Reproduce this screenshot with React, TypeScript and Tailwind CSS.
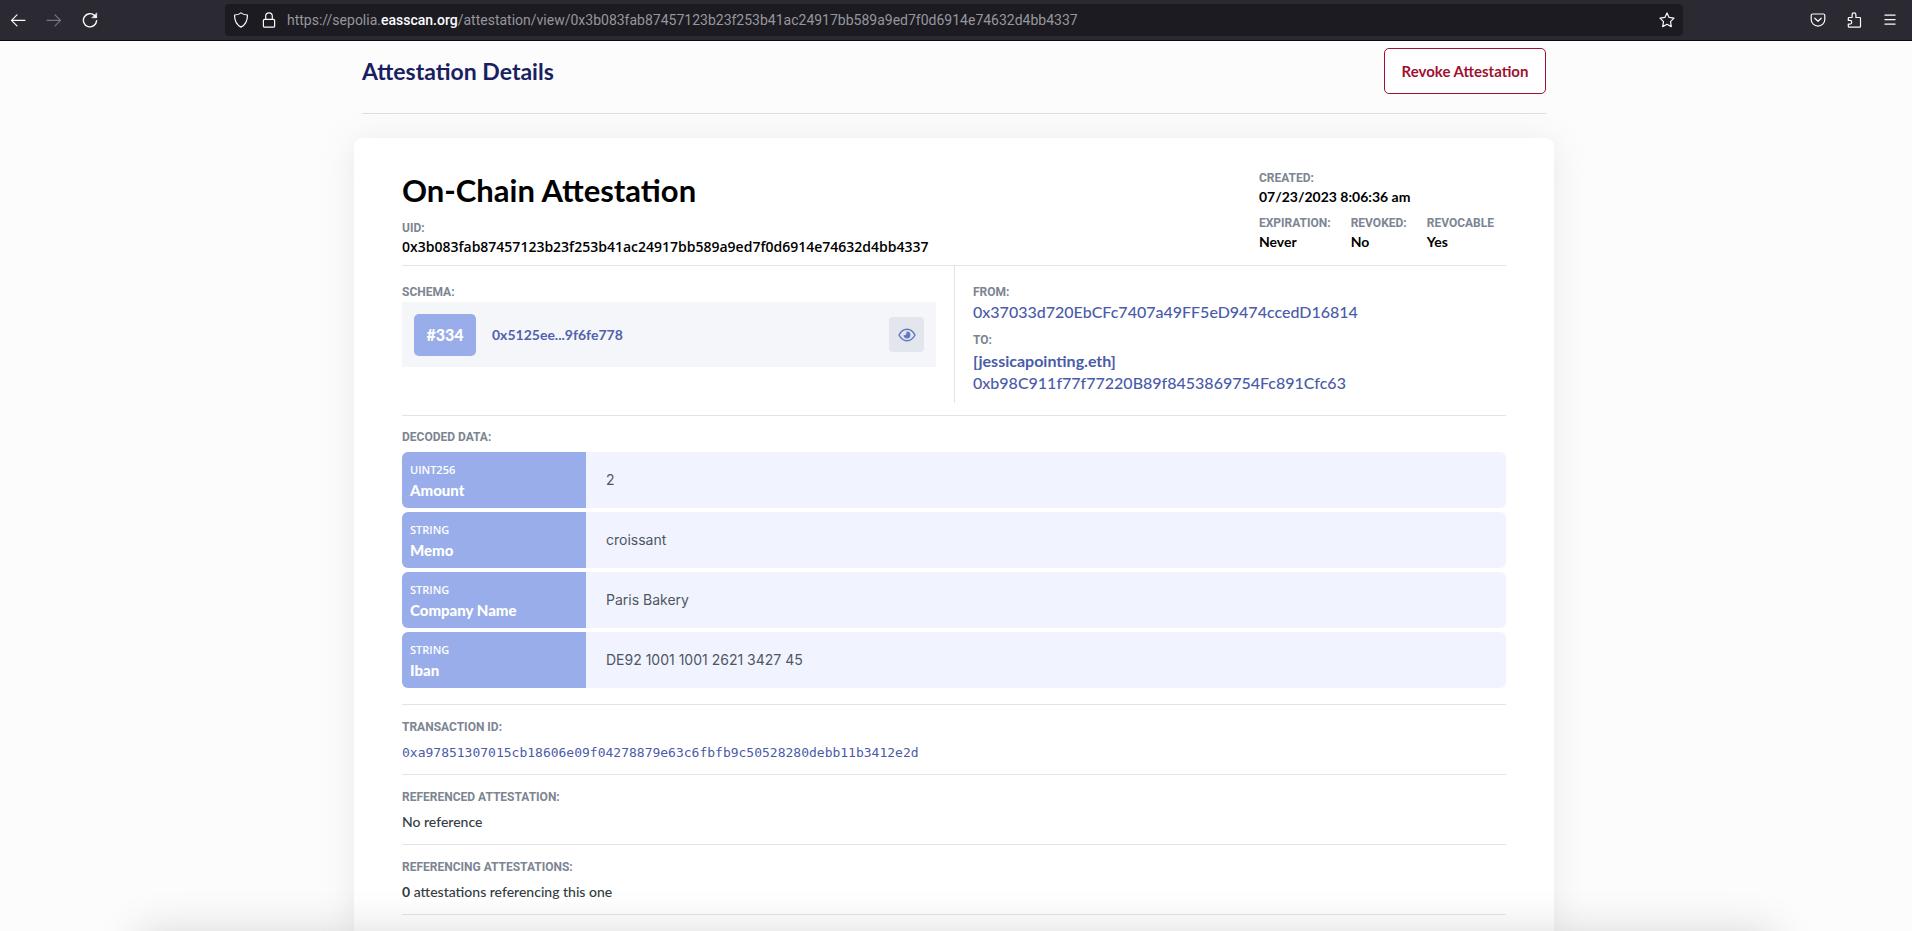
import { ReactNode } from "react";

type DecodedField = { type: string; name: string; value: string };

const decoded: DecodedField[] = [
  { type: "UINT256", name: "Amount", value: "2" },
  { type: "STRING", name: "Memo", value: "croissant" },
  { type: "STRING", name: "Company Name", value: "Paris Bakery" },
  { type: "STRING", name: "Iban", value: "DE92 1001 1001 2621 3427 45" },
];

function Icon({ children, className = "" }: { children: ReactNode; className?: string }) {
  return (
    <svg
      viewBox="0 0 16 16"
      className={`size-4 ${className}`}
      fill="none"
      stroke="currentColor"
      strokeWidth="1.2"
      strokeLinecap="round"
      strokeLinejoin="round"
      aria-hidden="true"
    >
      {children}
    </svg>
  );
}

function Label({ children }: { children: ReactNode }) {
  return (
    <div className="font-['Roboto',sans-serif] text-xs leading-4 font-bold text-[#7c8592] uppercase">
      {children}
    </div>
  );
}

function BrowserBar() {
  return (
    <header className="flex h-[41px] shrink-0 items-center border-b border-[#0c0c0d] bg-[#2b2a33] pr-[14px] pl-[10px] text-[#fbfbfe]">
      <nav className="flex w-[215px] gap-5">
        <button type="button" aria-label="Back">
          <Icon>
            <path d="M15 8.3H1.6M7 2.8 1.5 8.3 7 13.8" />
          </Icon>
        </button>
        <button type="button" aria-label="Forward" className="text-[#77767e]">
          <Icon>
            <path d="M1 8.3h13.4M9 2.8l5.5 5.5L9 13.8" />
          </Icon>
        </button>
        <button type="button" aria-label="Reload">
          <Icon>
            <path d="M14.6 8.6a6.6 6.6 0 1 1-2-5.1L14.2 5" strokeWidth="1.4" />
            <path d="M14.7 1.2v4.6h-4.6z" fill="currentColor" strokeWidth=".6" />
          </Icon>
        </button>
      </nav>
      <div className="flex h-8 min-w-0 flex-1 items-center rounded bg-[#1c1b22] pr-2 pl-2">
        <Icon className="shrink-0">
          <path d="M8 .9C6.6 2.2 4.2 2.9 1.5 3c0 5.6 1.7 9.600 6.500 12.100C12.800 12.600 14.500 8.600 14.500 3 11.800 2.900 9.400 2.200 8 .9z" />
        </Icon>
        <Icon className="ml-3 shrink-0">
          <rect x="2.4" y="7.3" width="11.2" height="7.9" rx="1.3" />
          <path d="M4.7 7.200V4.100a3.300 3.300 0 0 1 6.600 0v3.100" />
        </Icon>
        <div className="ml-[10px] flex-1 truncate font-['Roboto',sans-serif] text-sm text-[#97969c]">
          https://sepolia.<span className="font-medium text-[#fbfbfe]">easscan.org</span>
          /attestation/view/0x3b083fab87457123b23f253b41ac24917bb589a9ed7f0d6914e74632d4bb4337
        </div>
        <button type="button" aria-label="Bookmark this page">
          <Icon>
            <path d="m8 .9 2.100 4.500 4.900.7-3.500 3.500.8 5L8 12.300l-4.300 2.300.8-5L1 6.100l4.900-.7z" />
          </Icon>
        </button>
      </div>
      <div className="flex w-[215px] justify-end gap-5">
        <button type="button" aria-label="Save to Pocket">
          <Icon>
            <path d="M2.700 2h10.600c.9 0 1.500.6 1.500 1.500v4a6.800 6.600 0 0 1-13.600 0v-4C1.200 2.600 1.800 2 2.700 2z" />
            <path d="M4.800 6.200 8 9.300l3.200-3.100" />
          </Icon>
        </button>
        <button type="button" aria-label="Extensions">
          <Icon>
            <path d="M3 15.200h10.800c.4 0 .7-.3.7-.7V6.200c0-.4-.3-.7-.7-.7H9.900V2.800a1.900 1.900 0 0 0-3.800 0v2.700H3c-.4 0-.7.3-.7.7v2.200h1.600a1.800 1.800 0 0 1 0 3.700H2.300v2.400c0 .4.3.7.7.7z" />
          </Icon>
        </button>
        <button type="button" aria-label="Open menu">
          <Icon>
            <path d="M2.500 3.200h11M2.500 7.700h11M2.500 12.200h11" strokeLinecap="butt" />
          </Icon>
        </button>
      </div>
    </header>
  );
}

function Fact({ label, value }: { label: string; value: string }) {
  return (
    <div>
      <Label>{label}</Label>
      <div className="mt-px text-sm leading-5 font-bold text-black">{value}</div>
    </div>
  );
}

function Section({ label, children }: { label: string; children: ReactNode }) {
  return (
    <section className="h-[70px] border-b border-[#e2e4e6] pt-[14px]">
      <Label>{label}</Label>
      <div className="mt-[7px] text-sm leading-5 font-medium text-[#333c44]">{children}</div>
    </section>
  );
}

export default function App() {
  return (
    <div className="relative flex h-screen flex-col overflow-hidden bg-[#fcfcfc] font-['Lato',sans-serif]">
      <BrowserBar />
      <main className="mx-auto flex w-full max-w-[1204px] flex-1 flex-col pr-1">
        <div className="mx-2 flex h-[73px] shrink-0 items-start justify-between border-b border-[#dcdfdf] pt-[7px]">
          <h2 className="text-[23px] leading-[46px] font-bold text-[#1a1f62]">Attestation Details</h2>
          <button
            type="button"
            className="h-[46px] w-[162px] rounded-[5px] border border-[#9c1230] bg-white text-[15px] font-bold text-[#a01030]"
          >
            Revoke Attestation
          </button>
        </div>

        <article className="mt-6 flex-1 rounded-t-lg bg-white px-12 pt-8 shadow-[0_4px_33px_rgba(168,173,180,0.24)]">
          <div className="flex h-24 items-start justify-between border-b border-[#e2e4e6]">
            <div>
              <h1 className="text-[31px] leading-10 font-bold text-black">On-Chain Attestation</h1>
              <div className="mt-[10px]">
                <Label>UID:</Label>
                <div className="mt-px font-['Open_Sans',sans-serif] text-sm leading-5 font-semibold text-black">
                  0x3b083fab87457123b23f253b41ac24917bb589a9ed7f0d6914e74632d4bb4337
                </div>
              </div>
            </div>
            <div className="flex flex-col gap-2 pr-3">
              <Fact label="Created:" value="07/23/2023 8:06:36 am" />
              <div className="flex gap-5">
                <Fact label="Expiration:" value="Never" />
                <Fact label="Revoked:" value="No" />
                <Fact label="Revocable" value="Yes" />
              </div>
            </div>
          </div>

          <div className="grid h-[150px] grid-cols-2 border-b border-[#e2e4e6] pb-3">
            <div className="pt-[18px] pr-[18px]">
              <Label>Schema:</Label>
              <div className="mt-[2px] flex h-[65px] items-center bg-[#f5f6fa] pr-3 pl-3">
                <span className="flex h-[42px] w-[62px] items-center justify-center rounded-[5px] bg-[#98ade9] text-base font-black text-white">
                  #334
                </span>
                <a href="#schema" className="ml-4 text-sm font-bold text-[#5161ae]">
                  0x5125ee...9f6fe778
                </a>
                <button
                  type="button"
                  aria-label="View schema"
                  className="ml-auto flex size-[35px] items-center justify-center rounded bg-[#e3e6ec] text-[#6078c4]"
                >
                  <svg viewBox="0 0 18 14" className="h-[14px] w-[18px]" aria-hidden="true">
                    <path
                      d="M1 7C3 3.300 5.700 1.300 9 1.300S15 3.300 17 7c-2 3.700-4.700 5.700-8 5.700S3 10.700 1 7z"
                      fill="none"
                      stroke="currentColor"
                      strokeWidth="1.5"
                      strokeLinejoin="round"
                    />
                    <path
                      d="M9 3.600A3.400 3.400 0 1 1 5.600 7c.6.2 1.300.2 1.900-.1.900-.6 1.300-2 .8-3.200z"
                      fill="currentColor"
                    />
                  </svg>
                </button>
              </div>
            </div>
            <div className="border-l border-[#e2e4e6] pt-[18px] pl-[18px] text-base leading-[22px] text-[#4a5ba9]">
              <Label>From:</Label>
              <a href="#from" className="mt-px block font-medium">
                0x37033d720EbCFc7407a49FF5eD9474ccedD16814
              </a>
              <div className="mt-[9px]">
                <Label>To:</Label>
              </div>
              <a href="#to" className="mt-[2px] block font-medium">
                <span className="font-bold">[jessicapointing.eth]</span>
                <br />
                0xb98C911f77f77220B89f8453869754Fc891Cfc63
              </a>
            </div>
          </div>

          <div className="border-b border-[#e2e4e6] pt-[13px] pb-4">
            <Label>Decoded Data:</Label>
            <div className="mt-[3px] -mb-1">
              <table className="w-full table-fixed border-separate border-spacing-x-0 border-spacing-y-1">
                <tbody>
                  {decoded.map((field) => (
                    <tr key={field.name} className="h-14">
                      <th
                        scope="row"
                        className="w-[184px] rounded-l-md bg-[#98ade9] py-0 pr-2 pl-2 text-left text-white"
                      >
                        <div className="font-['Open_Sans',sans-serif] text-[11px] leading-5 font-semibold">
                          {field.type}
                        </div>
                        <div className="text-[15px] leading-5 font-black">{field.name}</div>
                      </th>
                      <td className="rounded-r-md bg-[#f1f4fe] p-0 pl-5 font-['Inter',sans-serif] text-sm text-[#4e5663]">
                        {field.value}
                      </td>
                    </tr>
                  ))}
                </tbody>
              </table>
            </div>
          </div>

          <Section label="Transaction ID:">
            <a href="#tx" className="font-['DejaVu_Sans_Mono',monospace] text-[13px] text-[#4a5ba9]">
              0xa97851307015cb18606e09f04278879e63c6fbfb9c50528280debb11b3412e2d
            </a>
          </Section>
          <Section label="Referenced Attestation:">No reference</Section>
          <Section label="Referencing Attestations:">
            <strong>0</strong> attestations referencing this one
          </Section>
        </article>
      </main>
      <div className="pointer-events-none absolute inset-x-[138px] top-full h-20 shadow-[0_0_44px_rgba(0,0,0,0.14)]" />
    </div>
  );
}
